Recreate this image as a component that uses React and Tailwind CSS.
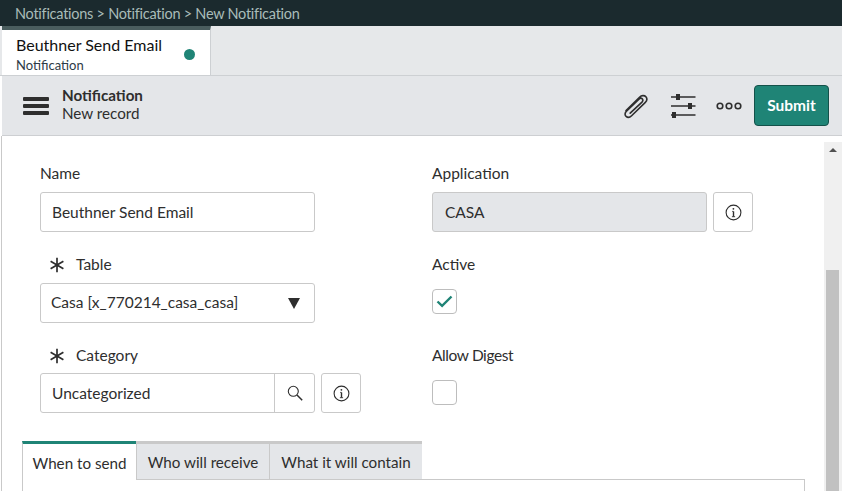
import React from 'react';

const font = { fontFamily: '"Source Sans Pro", Lato, "Noto Sans", sans-serif' };

function InfoIcon() {
  return (
    <svg width="17" height="17" viewBox="0 0 17 17" fill="none" stroke="#2e2e2e">
      <circle cx="8.5" cy="8.5" r="7.4" strokeWidth="1.1" />
      <path d="M8.5 7.4v5.2" strokeWidth="1.4" />
      <path d="M6.9 12.7h3.2M7.2 7.4h1.3" strokeWidth="0.9" />
      <circle cx="8.4" cy="4.8" r="0.9" fill="#2e2e2e" stroke="none" />
    </svg>
  );
}

function Asterisk() {
  return (
    <svg width="16" height="16" viewBox="0 0 16 16" stroke="#2e2e2e" strokeWidth="1.7" className="mr-[11px]">
      <path d="M8 .8v14.4M1.6 4.2l12.8 7.6M14.4 4.2L1.6 11.8" />
    </svg>
  );
}

function Label({ required, tight, children }) {
  return (
    <div className={`flex items-center h-[20px] pt-[2px] text-[15.5px] text-[#2e2e2e] ${tight ? 'mb-[8px]' : 'mb-[9px]'}`}>
      {required && <span className="ml-[9px]"><Asterisk /></span>}
      {children}
    </div>
  );
}

function InfoButton() {
  return (
    <div className="ml-[6px] w-[40px] h-[40px] flex items-center justify-center border border-[#c9c9c9] rounded-[3px] bg-white">
      <InfoIcon />
    </div>
  );
}

function Checkbox({ checked, className }) {
  return (
    <div className={`w-[25px] h-[25px] flex items-center justify-center border border-[#bdbdbd] rounded-[4px] bg-white ${className}`}>
      {checked && (
        <svg width="17" height="13" viewBox="0 0 17 13" fill="none" stroke="#1f8476" strokeWidth="2.4">
          <path d="M1.5 6.5l4.6 4.4L15.5 1.5" />
        </svg>
      )}
    </div>
  );
}

export default function App() {
  return (
    <div className="w-[842px] h-[491px] overflow-hidden flex flex-col bg-white" style={font}>
      {/* breadcrumb */}
      <div className="h-[26px] shrink-0 bg-[#1b2a2e] pl-[15px] pt-[2px] flex items-center text-[14.5px] tracking-[-0.26px] text-[#a9bcb9]">
        Notifications &gt; Notification &gt; New Notification
      </div>

      {/* open tabs */}
      <div className="h-[50px] shrink-0 bg-[#e6e8ea] pl-[2px] border-b border-[#cdd0d3] flex">
        <div className="w-[209px] h-[49px] bg-white border-t-[4px] border-t-[#4a5d5e] border-r border-r-[#cdd0d3] pl-[14px] pr-[15px] flex items-center justify-between">
          <div>
            <div className="text-[16px] leading-[20px] mt-[4px] text-[#111]">Beuthner Send Email</div>
            <div className="text-[13px] leading-[17px] mt-[2px] text-[#2e3b46]">Notification</div>
          </div>
          <div className="w-[11px] h-[11px] mt-[3px] rounded-full bg-[#1f8476]" />
        </div>
      </div>

      {/* form header */}
      <div className="h-[60px] shrink-0 bg-[#e4e6e9] ml-[2px] border-b border-[#cdcfd2] flex items-center pl-[21px] pr-[13px]">
        <div className="w-[26px] flex flex-col gap-[3px] mr-[13px]">
          <div className="h-[4px] bg-[#2e2e2e] rounded-[1px]" />
          <div className="h-[4px] bg-[#2e2e2e] rounded-[1px]" />
          <div className="h-[4px] bg-[#2e2e2e] rounded-[1px]" />
        </div>
        <div className="text-[#2e2e2e] pb-[2px]">
          <div className="text-[15.2px] leading-[17px] font-bold">Notification</div>
          <div className="text-[15.2px] leading-[18px]">New record</div>
        </div>
        <div className="ml-auto flex items-center">
          <svg width="28" height="26" viewBox="0 0 28 26" fill="none" stroke="#2e2e2e" strokeWidth="1.6" strokeLinecap="round" className="mr-[22px]">
            <path d="M5 17.5L18.5 4.2c2-2 5-2 6.4-.4s1 4-.8 5.8L10.6 22.7c-1.6 1.6-4 2-5.5.7-1.6-1.4-1.2-3.7.4-5.3L18 6.2c1-1 2.4-1.2 3.3-.3.9.9.7 2.2-.3 3.2L9.2 20.2" />
          </svg>
          <svg width="25" height="27" viewBox="0 0 25 27" className="mr-[20px]" fill="#2e2e2e" stroke="#2e2e2e">
            <path d="M0 5h24.5M0 14h24.5M0 23h24.5" strokeWidth="1.6" />
            <rect x="5" y="2" width="4" height="6" stroke="none" />
            <rect x="17" y="11" width="4" height="6" stroke="none" />
            <rect x="1" y="20" width="4" height="6" stroke="none" />
          </svg>
          <svg width="26" height="8" viewBox="0 0 26 8" fill="none" stroke="#2e2e2e" strokeWidth="1.6" className="mr-[12px]">
            <circle cx="4" cy="4" r="2.8" />
            <circle cx="13" cy="4" r="2.8" />
            <circle cx="22" cy="4" r="2.8" />
          </svg>
          <div className="w-[75px] h-[41px] flex items-center justify-center rounded-[4px] bg-[#1f8476] border border-[#14514a] text-white text-[15.5px] font-bold">
            Submit
          </div>
        </div>
      </div>

      {/* body */}
      <div className="flex-1 min-h-0 flex ml-[1px] border-l border-[#c9c9c9]">
        <div className="flex-1 min-w-0 pl-[20px] pr-[19px]">
          <div className="grid grid-cols-[392px_1fr] pl-[18px] pt-[27px]">
            <div>
              <Label>Name</Label>
              <div className="w-[275px] h-[40px] border border-[#c9c9c9] rounded-[3px] pl-[11px] pt-[2px] flex items-center text-[15.5px] text-[#2e2e2e]">
                Beuthner Send Email
              </div>
            </div>
            <div>
              <Label>Application</Label>
              <div className="flex">
                <div className="w-[275px] h-[40px] border border-[#c9c9c9] rounded-[3px] bg-[#e4e6e9] pl-[12px] pt-[2px] flex items-center text-[15.5px] text-[#2e2e2e]">
                  CASA
                </div>
                <InfoButton />
              </div>
            </div>

            <div className="mt-[22px]">
              <Label required>Table</Label>
              <div className="w-[275px] h-[40px] border border-[#c9c9c9] rounded-[3px] pl-[10px] pr-[14px] flex items-center justify-between text-[15.5px] text-[#2e2e2e]">
                Casa [x_770214_casa_casa]
                <div className="w-0 h-0 border-x-[6.5px] border-x-transparent border-t-[11px] border-t-[#2e2e2e]" />
              </div>
            </div>
            <div className="mt-[22px]">
              <Label>Active</Label>
              <Checkbox checked className="mt-[15px]" />
            </div>

            <div className="mt-[22px]">
              <Label required tight>Category</Label>
              <div className="flex">
                <div className="w-[275px] h-[40px] border border-[#c9c9c9] rounded-[3px] flex items-center text-[15.5px] text-[#2e2e2e]">
                  <div className="flex-1 pl-[11px] pt-[2px]">Uncategorized</div>
                  <div className="w-[40px] h-full border-l border-[#c9c9c9] flex items-center justify-center">
                    <svg width="16" height="16" viewBox="0 0 16 16" fill="none" stroke="#2e2e2e" strokeWidth="1.1">
                      <circle cx="6.3" cy="6.3" r="5" />
                      <path d="M10 10l5.2 5.2" strokeWidth="1.5" />
                    </svg>
                  </div>
                </div>
                <InfoButton />
              </div>
            </div>
            <div className="mt-[22px]">
              <Label tight><span className="tracking-[-0.4px]">Allow Digest</span></Label>
              <Checkbox className="mt-[15px]" />
            </div>
          </div>

          {/* related tabs */}
          <div className="mt-[28px] flex text-[15.2px] text-[#2e2e2e] border-b border-[#c9c9c9] h-[39px]">
            <div className="w-[114px] h-[39px] pt-[2px] bg-white border-t-[3px] border-t-[#1f8476] border-l border-l-[#c9c9c9] flex items-center justify-center">
              When to send
            </div>
            <div className="w-[133px] h-[38px] pt-[2px] bg-[#e4e6e9] border-t-[3px] border-t-[#c9c9c9] border-l border-l-[#c9c9c9] flex items-center justify-center">
              Who will receive
            </div>
            <div className="w-[153px] h-[38px] pt-[2px] bg-[#e4e6e9] border-t-[3px] border-t-[#c9c9c9] border-l border-l-[#c9c9c9] flex items-center justify-center">
              What it will contain
            </div>
          </div>
          <div className="h-[20px] border-l border-r border-[#c9c9c9]" />
        </div>

        {/* scrollbar */}
        <div className="w-[18px] shrink-0 bg-[#f0f0f0] mt-[6px] flex flex-col items-center">
          <div className="mt-[6px] w-0 h-0 border-x-[4px] border-x-transparent border-b-[4px] border-b-[#505050]" />
          <div className="mt-[118px] self-start ml-[2px] w-[13px] flex-1 bg-[#c1c1c1]" />
        </div>
      </div>
    </div>
  );
}
